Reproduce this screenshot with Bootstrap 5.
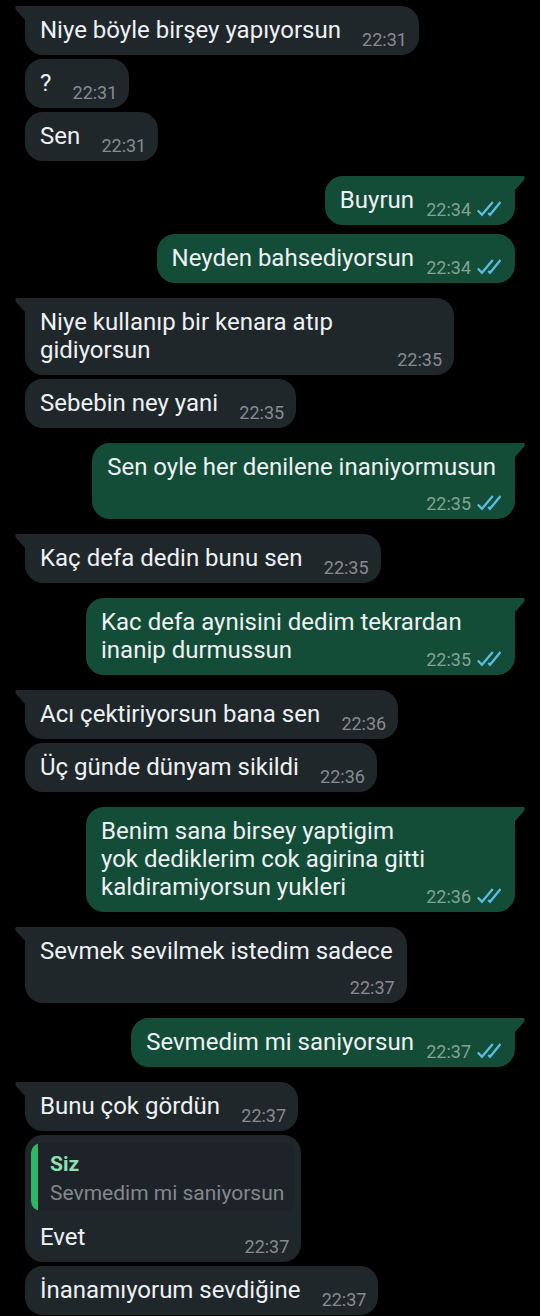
<!DOCTYPE html>
<html lang="tr">
<head>
<meta charset="utf-8">
<meta name="viewport" content="width=device-width, initial-scale=1">
<title>Sohbet</title>
<link href="https://cdn.jsdelivr.net/npm/bootstrap@5.3.0/dist/css/bootstrap.min.css" rel="stylesheet">
<style>
  body { background: #000; color: #edf1f3; font-family: Roboto, "Noto Sans", sans-serif; font-size: 24px; line-height: 28px; }
  .chat { padding: 6px 25px 1px; }
  .turn { gap: 4px; margin-bottom: 15px; }
  .turn.sent { gap: 9px; }
  .turn:last-child { margin-bottom: 0; }

  .bubble { --fill: #20272b; background: var(--fill); border-radius: 18px; max-width: min(429px, 100%); padding: 10px 12px 11px 15px; }
  .sent .bubble { --fill: #144d37; padding-right: 14px; }
  .turn:not(.sent) .bubble:first-child { border-top-left-radius: 0; }
  .sent .bubble:first-child { border-top-right-radius: 0; }

  /* text and time share one grid cell; the spacer keeps the last line clear of the time */
  .bubble-body { grid-template-columns: 1fr; }
  .bubble-body > * { grid-area: 1 / 1; }
  .bubble-text::after { content: ""; display: inline-block; width: 66px; }
  .sent .bubble-text::after { width: 87px; }
  .stacked .bubble-text { padding-right: 2px; }
  .sent .stacked .bubble-text { padding-right: 5px; }
  .stacked .bubble-text::after { display: none; }
  .stacked .stamp { grid-area: 2 / 1; padding-top: 13px; }

  .stamp { font-size: 18px; line-height: 20px; color: #868b8e; margin-bottom: -6px; gap: 6px; }
  .sent .stamp { color: #82a394; }
  .ticks { width: 24px; height: 17px; margin-bottom: 3px; }

  .tail { top: 0; width: 12px; height: 17px; fill: var(--fill); }
  .tail-in { left: -10px; }
  .tail-out { right: -10px; }

  .quoted { margin: -2px -6px 12px -9px; background: #1d2329; border-radius: 10px; overflow: hidden; font-size: 21px; line-height: 29px; color: #83888b; }
  .quoted-bar { width: 7px; background: #2eb767; }
  .quoted-body { padding: 7px 11px 3px 12px; }
  .quoted-name { color: #90dfb0; font-weight: 700; }
</style>
</head>
<body>
<svg class="d-none" aria-hidden="true">
  <symbol id="tail-in" viewBox="0 0 12 17"><path d="M12 0H2Q-1 0 1 4L10 14V17H12Z"/></symbol>
  <symbol id="tail-out" viewBox="0 0 12 17"><path d="M0 0H10Q13 0 11 4L2 14V17H0Z"/></symbol>
  <symbol id="ticks" viewBox="0 0 24 17"><path d="M.8 10.5 5 14.8 15.8 2M11.2 13 13 14.8 23.5 2" fill="none" stroke="#5bbce4" stroke-width="2.3"/></symbol>
</svg>
<main class="chat">
  <section class="turn d-flex flex-column align-items-start">
    <div class="bubble position-relative"><svg class="tail tail-in position-absolute"><use href="#tail-in"/></svg>
      <div class="bubble-body d-grid"><p class="bubble-text mb-0">Niye böyle birşey yapıyorsun</p><time class="stamp align-self-end ms-auto">22:31</time></div></div>
    <div class="bubble"><div class="bubble-body d-grid"><p class="bubble-text mb-0">?</p><time class="stamp align-self-end ms-auto">22:31</time></div></div>
    <div class="bubble"><div class="bubble-body d-grid"><p class="bubble-text mb-0">Sen</p><time class="stamp align-self-end ms-auto">22:31</time></div></div>
  </section>

  <section class="turn sent d-flex flex-column align-items-end">
    <div class="bubble position-relative"><svg class="tail tail-out position-absolute"><use href="#tail-out"/></svg>
      <div class="bubble-body d-grid"><p class="bubble-text mb-0">Buyrun</p><div class="stamp d-flex align-items-center align-self-end ms-auto"><time>22:34</time><svg class="ticks"><use href="#ticks"/></svg></div></div></div>
    <div class="bubble"><div class="bubble-body d-grid"><p class="bubble-text mb-0">Neyden bahsediyorsun</p><div class="stamp d-flex align-items-center align-self-end ms-auto"><time>22:34</time><svg class="ticks"><use href="#ticks"/></svg></div></div></div>
  </section>

  <section class="turn d-flex flex-column align-items-start">
    <div class="bubble position-relative"><svg class="tail tail-in position-absolute"><use href="#tail-in"/></svg>
      <div class="bubble-body d-grid"><p class="bubble-text mb-0">Niye kullanıp bir kenara atıp gidiyorsun</p><time class="stamp align-self-end ms-auto">22:35</time></div></div>
    <div class="bubble"><div class="bubble-body d-grid"><p class="bubble-text mb-0">Sebebin ney yani</p><time class="stamp align-self-end ms-auto">22:35</time></div></div>
  </section>

  <section class="turn sent d-flex flex-column align-items-end">
    <div class="bubble position-relative"><svg class="tail tail-out position-absolute"><use href="#tail-out"/></svg>
      <div class="bubble-body stacked d-grid"><p class="bubble-text mb-0">Sen oyle her denilene inaniyormusun</p><div class="stamp d-flex align-items-center ms-auto"><time>22:35</time><svg class="ticks"><use href="#ticks"/></svg></div></div></div>
  </section>

  <section class="turn d-flex flex-column align-items-start">
    <div class="bubble position-relative"><svg class="tail tail-in position-absolute"><use href="#tail-in"/></svg>
      <div class="bubble-body d-grid"><p class="bubble-text mb-0">Kaç defa dedin bunu sen</p><time class="stamp align-self-end ms-auto">22:35</time></div></div>
  </section>

  <section class="turn sent d-flex flex-column align-items-end">
    <div class="bubble position-relative w-100"><svg class="tail tail-out position-absolute"><use href="#tail-out"/></svg>
      <div class="bubble-body d-grid"><p class="bubble-text mb-0">Kac defa aynisini dedim tekrardan<br>inanip durmussun</p><div class="stamp d-flex align-items-center align-self-end ms-auto"><time>22:35</time><svg class="ticks"><use href="#ticks"/></svg></div></div></div>
  </section>

  <section class="turn d-flex flex-column align-items-start">
    <div class="bubble position-relative"><svg class="tail tail-in position-absolute"><use href="#tail-in"/></svg>
      <div class="bubble-body d-grid"><p class="bubble-text mb-0">Acı çektiriyorsun bana sen</p><time class="stamp align-self-end ms-auto">22:36</time></div></div>
    <div class="bubble"><div class="bubble-body d-grid"><p class="bubble-text mb-0">Üç günde dünyam sikildi</p><time class="stamp align-self-end ms-auto">22:36</time></div></div>
  </section>

  <section class="turn sent d-flex flex-column align-items-end">
    <div class="bubble position-relative"><svg class="tail tail-out position-absolute"><use href="#tail-out"/></svg>
      <div class="bubble-body d-grid"><p class="bubble-text mb-0">Benim sana birsey yaptigim<br>yok dediklerim cok agirina gitti kaldiramiyorsun yukleri</p><div class="stamp d-flex align-items-center align-self-end ms-auto"><time>22:36</time><svg class="ticks"><use href="#ticks"/></svg></div></div></div>
  </section>

  <section class="turn d-flex flex-column align-items-start">
    <div class="bubble position-relative"><svg class="tail tail-in position-absolute"><use href="#tail-in"/></svg>
      <div class="bubble-body stacked d-grid"><p class="bubble-text mb-0">Sevmek sevilmek istedim sadece</p><time class="stamp ms-auto">22:37</time></div></div>
  </section>

  <section class="turn sent d-flex flex-column align-items-end">
    <div class="bubble position-relative"><svg class="tail tail-out position-absolute"><use href="#tail-out"/></svg>
      <div class="bubble-body d-grid"><p class="bubble-text mb-0">Sevmedim mi saniyorsun</p><div class="stamp d-flex align-items-center align-self-end ms-auto"><time>22:37</time><svg class="ticks"><use href="#ticks"/></svg></div></div></div>
  </section>

  <section class="turn d-flex flex-column align-items-start">
    <div class="bubble position-relative"><svg class="tail tail-in position-absolute"><use href="#tail-in"/></svg>
      <div class="bubble-body d-grid"><p class="bubble-text mb-0">Bunu çok gördün</p><time class="stamp align-self-end ms-auto">22:37</time></div></div>
    <div class="bubble">
      <div class="quoted d-flex"><div class="quoted-bar"></div><div class="quoted-body"><div class="quoted-name">Siz</div><div>Sevmedim mi saniyorsun</div></div></div>
      <div class="bubble-body d-grid"><p class="bubble-text mb-0">Evet</p><time class="stamp align-self-end ms-auto">22:37</time></div></div>
    <div class="bubble"><div class="bubble-body d-grid"><p class="bubble-text mb-0">İnanamıyorum sevdiğine</p><time class="stamp align-self-end ms-auto">22:37</time></div></div>
  </section>
</main>
<script src="https://cdn.jsdelivr.net/npm/bootstrap@5.3.0/dist/js/bootstrap.bundle.min.js"></script>
</body>
</html>
